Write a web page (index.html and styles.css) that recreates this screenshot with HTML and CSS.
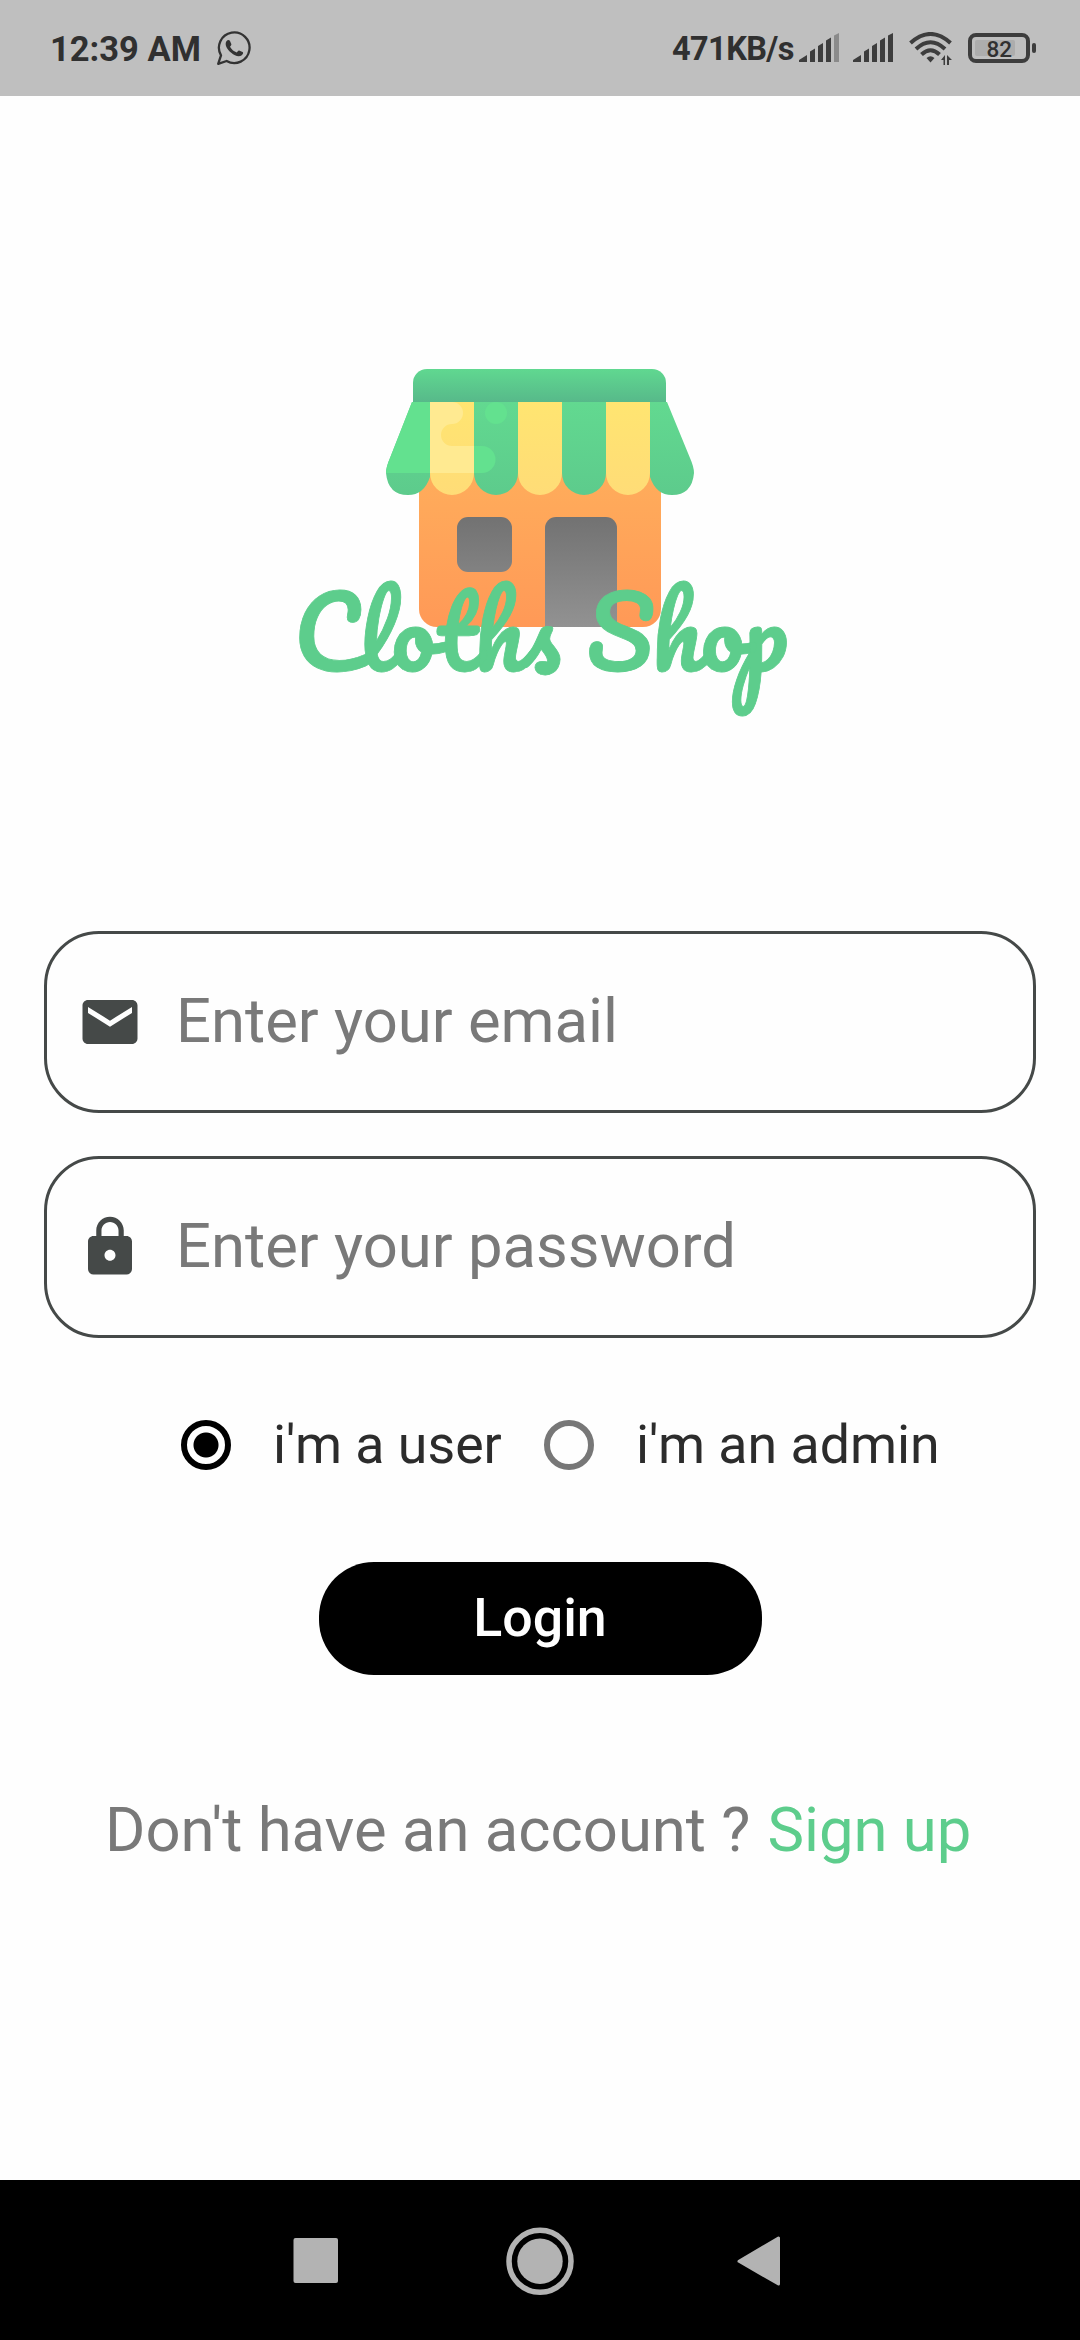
FILE: index.html
```html
<!DOCTYPE html>
<html lang="en">
<head>
<meta charset="utf-8">
<title>Cloths Shop</title>
<link rel="stylesheet" href="styles.css">
</head>
<body>
<header class="status">
  <span class="clock">12:39 AM</span>
  <svg class="whatsapp" width="34" height="34" viewBox="0 0 34 34"><path d="M1.2 32.8 4 24.4A15.3 15.3 0 1 1 9.6 30Z" fill="none" stroke="#333" stroke-width="2.3" stroke-linejoin="round"/><path d="M9.4 10.2C10.7 8.6 12.3 8.7 13 10l1.3 3.1c.3.9-.3 1.5-1.3 2.7 1.8 3 4 4.800 6.800 5.700 1.500-1.800 2-2.200 2.800-1.800l3 1.400c.9.500.5 2.200-.8 3.200-3 2.100-7 .6-10.600-2.500C10 18.400 7.300 13.400 9.400 10.200Z" fill="#333"/></svg>
  <span class="speed">471KB/s</span>
  <svg class="signal" width="40" height="30" viewBox="0 0 40 30" fill="#3d3d3d"><path d="M0 29v-2l8-5v7ZM11 29V18.500l5-3V29ZM19 29V13l5-3v19ZM27 29V7.500l5-3V29Z"/><path opacity=".4" d="M35 29V2.500l5-2.500v29Z"/></svg>
  <svg class="signal second" width="40" height="30" viewBox="0 0 40 30" fill="#3d3d3d"><path d="M0 29v-2l8-5v7ZM11 29V18.500l5-3V29ZM19 29V13l5-3v19ZM27 29V7.500l5-3V29ZM35 29V2.500l5-2.500v29Z"/></svg>
  <svg class="wifi" width="44" height="34" viewBox="0 0 44 34"><g fill="none" stroke="#3d3d3d" stroke-width="4"><path d="M1.500 11Q21.500-7 41.500 11"/><path d="M7 17Q21.500 3.500 36 17"/><path d="M12.500 22.500Q21.500 14 30.500 22.500"/></g><path d="M17.500 26Q21.500 22.500 25.500 26L21.500 30.500ZM32 28l4-5v10h-1.500v-5ZM38 23l5 5h-3v5h-2Z" fill="#3d3d3d"/></svg>
  <div class="battery"><span class="level">82</span></div>
</header>

<main class="screen">
  <svg class="logo" width="500" height="360" viewBox="290 365 500 360">
    <defs>
      <linearGradient id="wall" x1="0" y1="0" x2="0" y2="1"><stop stop-color="#ffad5b"/><stop offset="1" stop-color="#ff9957"/></linearGradient>
      <linearGradient id="roof" x1="0" y1="0" x2="0" y2="1"><stop stop-color="#60d890"/><stop offset="1" stop-color="#57b98a"/></linearGradient>
      <linearGradient id="green" gradientUnits="userSpaceOnUse" x1="0" y1="402" x2="0" y2="495"><stop stop-color="#62d990"/><stop offset="1" stop-color="#5dcb8c"/></linearGradient>
      <linearGradient id="yellow" gradientUnits="userSpaceOnUse" x1="0" y1="402" x2="0" y2="495"><stop stop-color="#ffe571"/><stop offset="1" stop-color="#ffdc77"/></linearGradient>
      <linearGradient id="glass" gradientUnits="userSpaceOnUse" x1="0" y1="517" x2="0" y2="627"><stop stop-color="#727272"/><stop offset="1" stop-color="#929292"/></linearGradient>
    </defs>
    <path d="M419 470H661V609a18 18 0 0 1-18 18H437a18 18 0 0 1-18-18Z" fill="url(#wall)"/>
    <rect x="457" y="517" width="55" height="55" rx="11" fill="url(#glass)"/>
    <path d="M545 627V528a11 11 0 0 1 11-11h50a11 11 0 0 1 11 11v99Z" fill="url(#glass)"/>
    <g fill="url(#green)">
      <path d="M412 402h18v75q-6 18-22 18-20 0-22-22 0-6 4-15Z"/>
      <path d="M474 402h44v71a22 22 0 0 1-44 0ZM562 402h44v71a22 22 0 0 1-44 0Z"/>
      <path d="M667 402h-17v75q6 18 22 18 20 0 22-22 0-6-4-15Z"/>
    </g>
    <path d="M430 402h44v71a22 22 0 0 1-44 0ZM518 402h44v71a22 22 0 0 1-44 0ZM606 402h44v71a22 22 0 0 1-44 0Z" fill="url(#yellow)"/>
    <path d="M412 402h18v71h-44q0-6 4-15Z" fill="#63e18f"/>
    <path d="M430 402h22a11 11 0 0 1 0 22 11 11 0 0 0 0 22h22v27h-44Z" fill="#ffea91"/>
    <path d="M474 446h8a13.500 13.500 0 0 1 0 27h-8Z" fill="#63e18f"/>
    <circle cx="496" cy="413" r="11" fill="#63e18f"/>
    <path d="M413 402V383a14 14 0 0 1 14-14H652a14 14 0 0 1 14 14v19Z" fill="url(#roof)"/>
    <text class="brand" x="293.500" y="671.500">Cloths Shop</text>
  </svg>

  <form class="form">
    <label class="field">
      <svg width="66" height="66" viewBox="0 0 24 24"><path d="M20 4H4c-1.100 0-2 .9-2 2v12c0 1.100.9 2 2 2h16c1.100 0 2-.9 2-2V6c0-1.100-.9-2-2-2zm0 4.700-8 5-8-5V6.500l8 5 8-5z"/></svg>
      <span class="hint">Enter your email</span>
    </label>
    <label class="field">
      <svg width="66" height="66" viewBox="0 0 24 24"><path d="M18 8h-1V6c0-2.760-2.240-5-5-5S7 3.240 7 6v2H6c-1.100 0-2 .9-2 2v10c0 1.100.9 2 2 2h12c1.100 0 2-.9 2-2V10c0-1.100-.9-2-2-2zm-6 9c-1.100 0-2-.9-2-2s.9-2 2-2 2 .9 2 2-.9 2-2 2zm3.100-9H8.900V6c0-1.710 1.390-3.100 3.100-3.100s3.100 1.390 3.100 3.100z"/></svg>
      <span class="hint">Enter your password</span>
    </label>
    <div class="roles">
      <span class="radio checked"></span><span class="role user">i'm a user</span>
      <span class="radio"></span><span class="role">i'm an admin</span>
    </div>
    <button class="login" type="button">Login</button>
  </form>
  <p class="register"><span>Don't have an account ?</span><a class="signup">Sign up</a></p>
</main>

<nav class="navbar">
  <svg width="1080" height="160" viewBox="0 0 1080 160" fill="#b3b3b3"><rect x="293.500" y="58" width="44.500" height="45" rx="2"/><circle cx="540" cy="81.300" r="22.700"/><circle cx="540" cy="81.300" r="31" fill="none" stroke="#b3b3b3" stroke-width="5.500"/><path d="M739 81.300 778.500 58v46Z" stroke="#b3b3b3" stroke-width="3" stroke-linejoin="round"/></svg>
</nav>
</body>
</html>
```

FILE: styles.css
```css
* { box-sizing: border-box; }
body {
  margin: 0;
  width: 1080px;
  height: 2340px;
  display: flex;
  flex-direction: column;
  background: #fefefe;
  font-family: Roboto, "Liberation Sans", sans-serif;
}
.status {
  height: 96px;
  padding: 0 45px 0 50px;
  display: flex;
  align-items: center;
  background: #bfbfbf;
  color: #303030;
  font-weight: 700;
  white-space: nowrap;
}
.clock { width: 167px; font-size: 34.500px; line-height: 40px; padding-top: 2px; }
.speed { width: 127px; margin-left: 421px; font-size: 32.500px; letter-spacing: -.600px; line-height: 40px; padding-top: 1px; }
.signal.second { margin-left: 14px; }
.wifi { margin-left: 16px; margin-top: 2px; }
.battery {
  position: relative;
  width: 62px;
  height: 30px;
  margin-left: 15px;
  border: 4px solid #3d3d3d;
  border-radius: 8px;
  padding: 3px;
  display: flex;
}
.battery::after {
  content: "";
  position: absolute;
  right: -10px;
  top: 6px;
  width: 4px;
  height: 10px;
  border-radius: 2px;
  background: #3d3d3d;
}
.level {
  width: 40px;
  height: 16px;
  padding-left: 11.500px;
  border-radius: 2px;
  background: #adadad;
  font-size: 22.500px;
  font-weight: 500;
  line-height: 18px;
}
.screen { height: 2084px; display: flex; flex-direction: column; align-items: center; }
.logo { margin-top: 269px; flex: none; overflow: visible; }
.brand {
  font-family: Pacifico, Lato, cursive;
  font-size: 96.250px;
  fill: #5dcd8c;
  stroke: #5dcd8c;
  stroke-width: .8px;
}
.form { width: 992px; margin-top: 206px; display: flex; flex-direction: column; align-items: center; }
.field {
  width: 992px;
  height: 182px;
  margin-bottom: 43px;
  padding-left: 30px;
  border: 3px solid #454948;
  border-radius: 55px;
  display: flex;
  align-items: center;
}
.field svg { fill: #454948; margin-right: 33px; }
.hint { padding-bottom: 2px; font-size: 61.600px; line-height: 70px; color: #797979; }
.roles { width: 992px; height: 60px; margin-top: 34px; padding-left: 137px; display: flex; align-items: center; white-space: nowrap; }
.radio { width: 50px; height: 50px; border: 6px solid #777; border-radius: 50%; flex: none; }
.radio.checked { border-color: #000; background: radial-gradient(circle, #000 12px, transparent 13px); }
.role { margin-left: 42px; font-size: 53.700px; line-height: 60px; color: #2c2c2c; }
.role.user { width: 229px; }
.role.user + .radio { margin-left: 42px; }
.login {
  width: 443px;
  height: 113px;
  margin-top: 87px;
  padding: 0 0 2px;
  border: 0;
  border-radius: 55px;
  background: #000;
  color: #fff;
  font: 500 53.700px/60px Roboto, sans-serif;
}
.register { margin: 119px 0 0; width: 1080px; padding-left: 105px; display: flex; font-size: 61.600px; line-height: 72px; color: #797979; white-space: nowrap; }
.signup { margin-left: 17px; color: #5dcd8c; }
.navbar { height: 160px; background: #000; }
.navbar svg { display: block; }
```
